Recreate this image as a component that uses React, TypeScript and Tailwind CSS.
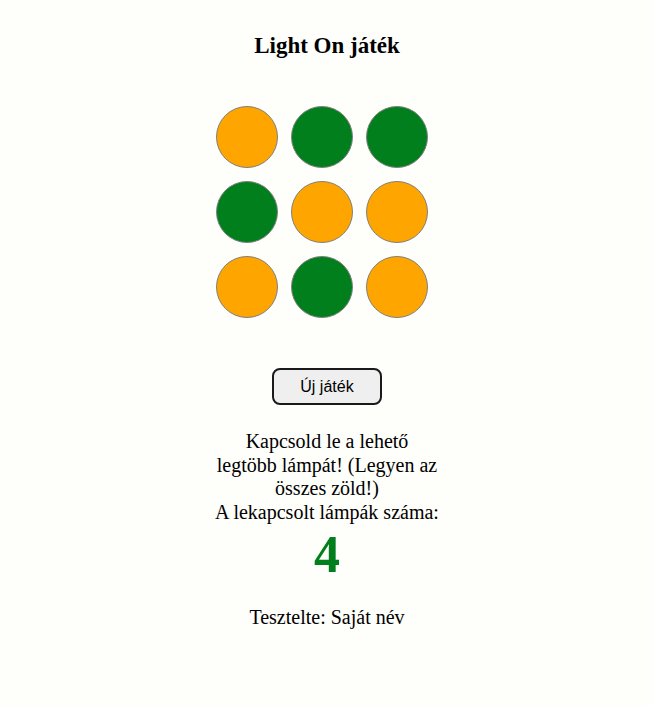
const lamps = [
  "orange", "green", "green",
  "green", "orange", "orange",
  "orange", "green", "orange",
];

export default function App() {
  return (
    <div className="min-h-[706px] w-full bg-[#fefefa] text-black font-['Liberation_Serif',serif] flex flex-col items-center">
      <h2 className="mt-[32px] text-[23px] leading-[27px] font-bold">Light On játék</h2>

      {/* lamp grid */}
      <div className="mt-[47px] grid grid-cols-[62px_62px_62px] gap-[13px] mr-[10px]">
        {lamps.map((c, i) => (
          <div
            key={i}
            className={
              c === "orange"
                ? "w-[62px] h-[62px] rounded-full border border-[#808080] bg-[#ffa500]"
                : "w-[62px] h-[62px] rounded-full border border-[#808080] bg-[#007f1c]"
            }
          />
        ))}
      </div>

      <button className="mt-[50px] w-[110px] h-[37px] rounded-[8px] border-2 border-[#1a1a1a] bg-[#efefef] font-['Liberation_Sans',sans-serif] text-[16px] text-black">
        Új játék
      </button>

      <div className="mt-[25px] w-[240px] text-center text-[20px] leading-[23.5px]">
        <p>
          Kapcsold le a lehető
          <br />
          legtöbb lámpát! (Legyen az
          <br />
          összes zöld!)
        </p>
        <p>A lekapcsolt lámpák száma:</p>
        <p className="mt-[1px] text-[52px] leading-[60px] font-bold text-[#007f1c]">4</p>
      </div>

      <p className="mt-[21px] text-[20px] leading-[23.5px]">Tesztelte: Saját név</p>
    </div>
  );
}
